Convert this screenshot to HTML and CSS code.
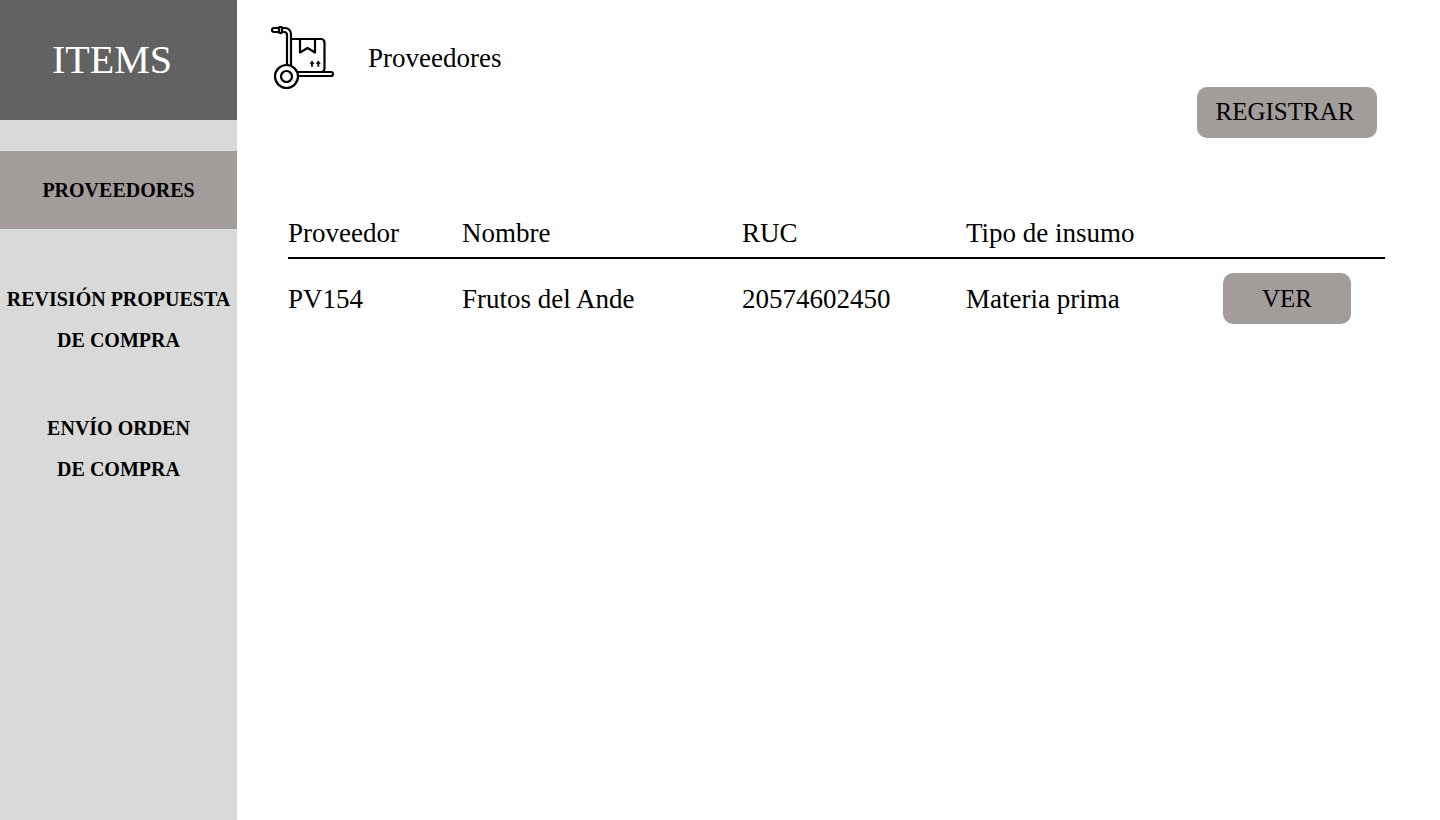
FILE: index.html
```html
<!DOCTYPE html>
<html lang="es">
<head>
<meta charset="utf-8">
<title>Proveedores</title>
<link rel="stylesheet" href="styles.css">
</head>
<body>
<div class="app">
  <aside class="sidebar">
    <div class="brand">ITEMS</div>
    <nav class="menu">
      <a class="menu-item active" href="#" aria-current="page">PROVEEDORES</a>
      <a class="menu-item" href="#">REVISIÓN PROPUESTA<br>DE COMPRA</a>
      <a class="menu-item" href="#">ENVÍO ORDEN<br>DE COMPRA</a>
    </nav>
  </aside>
  <main class="content">
    <header class="page-header">
      <svg class="page-icon" viewBox="9 8 64 64" aria-hidden="true">
        <path d="M17 10H12a2 2 0 0 0 0 4H17M20 10H23a6 6 0 0 1 6 6V47M20 14H22a3 3 0 0 1 3 3V47"/>
        <path d="M17 9.500Q18.500 8 20 9.500V14.500Q18.500 16 17 14.500Z"/>
        <path d="M29 21H59a3.500 3.500 0 0 1 3.500 3.500V50.500a3.500 3.500 0 0 1-1.500 3"/>
        <path d="M38 21V34.500L45.500 30L53 34.500V21"/>
        <path class="solid" d="M50 42.500l2.500 3.200h-1.600v3h-1.800v-3h-1.600zM56.300 42.500l2.500 3.200h-1.600v3h-1.800v-3h-1.600z"/>
        <path d="M35 54H69a2 2 0 0 1 0 4H36"/>
        <circle cx="24.500" cy="58.500" r="11.500"/>
        <circle cx="24.500" cy="58.500" r="5.500"/>
      </svg>
      <h1 class="page-title">Proveedores</h1>
    </header>
    <div class="toolbar"><button class="button register" type="button">REGISTRAR</button></div>
    <table class="suppliers">
      <colgroup><col class="col-code"><col class="col-name"><col class="col-ruc"><col class="col-type"><col></colgroup>
      <thead>
        <tr><th>Proveedor</th><th>Nombre</th><th>RUC</th><th>Tipo de insumo</th><td></td></tr>
      </thead>
      <tbody>
        <tr><td>PV154</td><td>Frutos del Ande</td><td>20574602450</td><td>Materia prima</td><td><button class="button view" type="button">VER</button></td></tr>
      </tbody>
    </table>
  </main>
</div>
</body>
</html>
```
FILE: styles.css
```css
* { box-sizing: border-box; }
body {
  margin: 0;
  background: #fff;
  color: #000;
  font-family: "Liberation Serif", serif;
}
.app { display: flex; min-height: 100vh; }
.sidebar { flex: 0 0 237px; background: #d9d9d9; }
.brand {
  display: flex;
  align-items: center;
  justify-content: center;
  height: 120px;
  padding: 0 13px 2px 0;
  background: #626262;
  color: #fff;
  font-size: 40px;
}
.menu { display: flex; flex-direction: column; gap: 47px; padding-top: 31px; }
.menu-item {
  color: #000;
  font-size: 20px;
  font-weight: 700;
  line-height: 41px;
  text-align: center;
  text-decoration: none;
  white-space: nowrap;
}
.active { padding: 19px 0 18px; background: #a29c9b; }
.menu-item.active { margin-bottom: 3px; }
.content { flex: 1; padding: 26px 55px 40px 34px; }
.page-header { display: flex; align-items: center; gap: 33px; height: 64px; }
.page-icon {
  width: 64px;
  height: 64px;
  fill: none;
  stroke: #000;
  stroke-width: 2.2;
  stroke-linecap: round;
  stroke-linejoin: round;
}
.solid { fill: #000; stroke: none; }
.page-title { margin: 0; font-size: 27px; font-weight: 400; line-height: 32px; }
.toolbar { display: flex; justify-content: flex-end; margin-top: -3px; padding-right: 8px; }
.button {
  height: 51px;
  border: 0;
  border-radius: 10px;
  background: #a29c9b;
  color: #000;
  font-family: inherit;
  font-size: 25px;
}
.register { width: 180px; padding: 0 8px 2px 4px; }
.view { display: block; width: 128px; }
.suppliers {
  width: calc(100% - 17px);
  margin: 70px 0 0 17px;
  border-collapse: collapse;
  table-layout: fixed;
  font-size: 27px;
  line-height: 32px;
}
.suppliers th, .suppliers td { padding: 0; font-weight: 400; text-align: left; }
.suppliers th { height: 50px; }
.suppliers thead { border-bottom: 2px solid #000; }
.suppliers tbody td { padding-top: 14px; }
.col-code { width: 174px; }
.col-name { width: 280px; }
.col-ruc { width: 224px; }
.col-type { width: 257px; }
```
